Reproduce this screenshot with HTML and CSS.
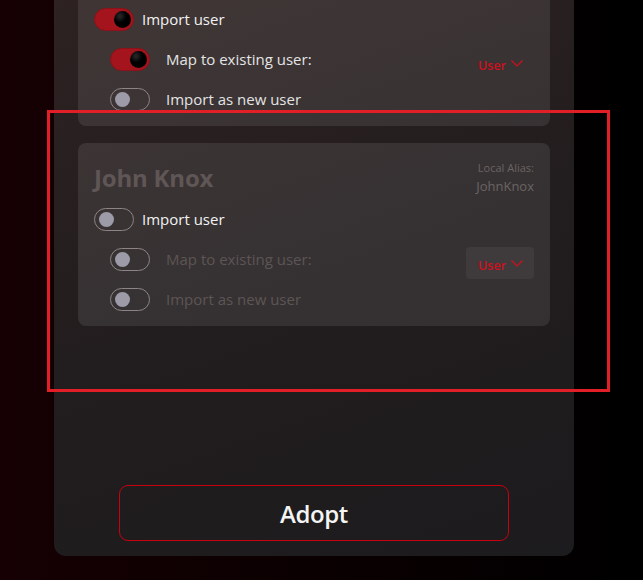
FILE: index.html
```html
<!DOCTYPE html>
<html>
<head>
  <meta charset="utf-8">
  <title>Adopt users</title>
  <link rel="stylesheet" href="styles.css">
</head>
<body>
  <div class="page">
    <div class="panel">
      <div class="user-list">
        <div class="user-card">
          <div class="card-head">
            <div class="user-name">Mary Knox</div>
            <div class="alias">
              <span class="alias-label">Local Alias:</span>
              <span class="alias-value">MaryKnox</span>
            </div>
          </div>
          <div class="option">
            <span class="toggle on"></span>
            <span class="option-text">Import user</span>
          </div>
          <div class="sub-options">
            <div class="option sub">
              <span class="toggle on"></span>
              <span class="option-text">Map to existing user:</span>
              <button class="user-pick">User
                <svg width="12" height="7" viewBox="0 0 12 7"><path d="M0.5 0.5 L6 6 L11.5 0.5" fill="none" stroke="currentColor" stroke-width="1.2"/></svg>
              </button>
            </div>
            <div class="option sub">
              <span class="toggle"></span>
              <span class="option-text">Import as new user</span>
            </div>
          </div>
        </div>

        <div class="user-card off">
          <div class="card-head">
            <div class="user-name">John Knox</div>
            <div class="alias">
              <span class="alias-label">Local Alias:</span>
              <span class="alias-value">JohnKnox</span>
            </div>
          </div>
          <div class="option">
            <span class="toggle"></span>
            <span class="option-text">Import user</span>
          </div>
          <div class="sub-options">
            <div class="option sub">
              <span class="toggle"></span>
              <span class="option-text">Map to existing user:</span>
              <button class="user-pick">User
                <svg width="12" height="7" viewBox="0 0 12 7"><path d="M0.5 0.5 L6 6 L11.5 0.5" fill="none" stroke="currentColor" stroke-width="1.2"/></svg>
              </button>
            </div>
            <div class="option sub">
              <span class="toggle"></span>
              <span class="option-text">Import as new user</span>
            </div>
          </div>
        </div>
      </div>
      <button class="adopt">Adopt</button>
    </div>
    <div class="highlight"></div>
  </div>
</body>
</html>
```

FILE: styles.css
```css
html, body {
  margin: 0;
  height: 100%;
}
body {
  font-family: "Open Sans", "Noto Sans", sans-serif;
  background: linear-gradient(to right, #160003 0%, #0a0001 50%, #000 100%);
  overflow: hidden;
}
.page {
  position: relative;
  height: 580px;
  overflow: hidden;
}
.panel {
  box-sizing: border-box;
  width: 520px;
  height: 637px;
  margin: -81px 0 0 54px;
  padding: 24px 24px 15px;
  border-radius: 12px;
  background: linear-gradient(160deg, #302323 0%, #221d1e 55%, #1c1b1d 100%);
  display: flex;
  flex-direction: column;
}
.user-list {
  flex: 1;
  display: flex;
  flex-direction: column;
  gap: 17px;
}
.user-card {
  box-sizing: border-box;
  height: 183px;
  padding: 16px 16px 15px;
  border-radius: 8px;
  background: rgba(255, 255, 255, 0.09);
}
.card-head {
  display: flex;
  justify-content: space-between;
  align-items: center;
  height: 36px;
  margin-bottom: 12px;
}
.user-name {
  font-size: 24px;
  font-weight: 700;
  color: #e8e8e8;
  letter-spacing: -0.2px;
}
.alias {
  display: flex;
  flex-direction: column;
  align-items: flex-end;
  line-height: 18px;
  color: #aaa;
}
.alias-label {
  font-size: 11px;
}
.alias-value {
  font-size: 13px;
}
.option {
  display: flex;
  align-items: center;
  gap: 8px;
  height: 24px;
  font-size: 15px;
  color: #f2f2f2;
}
.sub-options {
  margin-top: 16px;
  padding-left: 16px;
  display: flex;
  flex-direction: column;
  gap: 8px;
}
.option.sub {
  gap: 16px;
  align-items: flex-start;
  height: auto;
}
.option.sub .toggle {
  margin-top: 1px;
}
.option.sub .option-text {
  line-height: 24px;
  color: #e4e4e4;
}
.toggle {
  position: relative;
  box-sizing: border-box;
  flex: none;
  width: 40px;
  height: 23px;
  border: 1px solid #8d8585;
  border-radius: 12px;
}
.toggle::after {
  content: "";
  position: absolute;
  left: 4px;
  top: 3px;
  width: 15px;
  height: 15px;
  border-radius: 50%;
  background: #9c9ba7;
}
.toggle.on {
  background: #a3141c;
  border-color: #8c1119;
}
.toggle.on::after {
  left: 19px;
  top: 2px;
  width: 17px;
  height: 17px;
  background: radial-gradient(circle at 35% 30%, #2a2a2a 0%, #000 40%);
}
.user-pick {
  margin-left: auto;
  display: flex;
  align-items: center;
  gap: 5px;
  height: 32px;
  padding: 4px 11px 0 12px;
  border: none;
  border-radius: 4px;
  background: transparent;
  font-family: inherit;
  font-size: 12.5px;
  font-weight: 600;
  color: #d0101e;
}
.user-pick svg {
  margin-top: -3px;
}
.user-card.off .user-name {
  color: #5f5656;
}
.user-card.off .alias {
  color: #6b6464;
}
.user-card.off .sub .option-text {
  color: #5d5555;
}
.user-card.off .user-pick {
  background: rgba(255, 255, 255, 0.05);
}
.adopt {
  box-sizing: border-box;
  align-self: center;
  width: 390px;
  height: 56px;
  border: 1px solid #c8000f;
  border-radius: 9px;
  background: transparent;
  font-family: inherit;
  font-size: 24px;
  font-weight: 600;
  letter-spacing: -0.4px;
  color: #f4f4f4;
}
.highlight {
  position: absolute;
  left: 47px;
  top: 110px;
  width: 563px;
  height: 282px;
  box-sizing: border-box;
  border: 3px solid #e21f26;
  pointer-events: none;
}
```
